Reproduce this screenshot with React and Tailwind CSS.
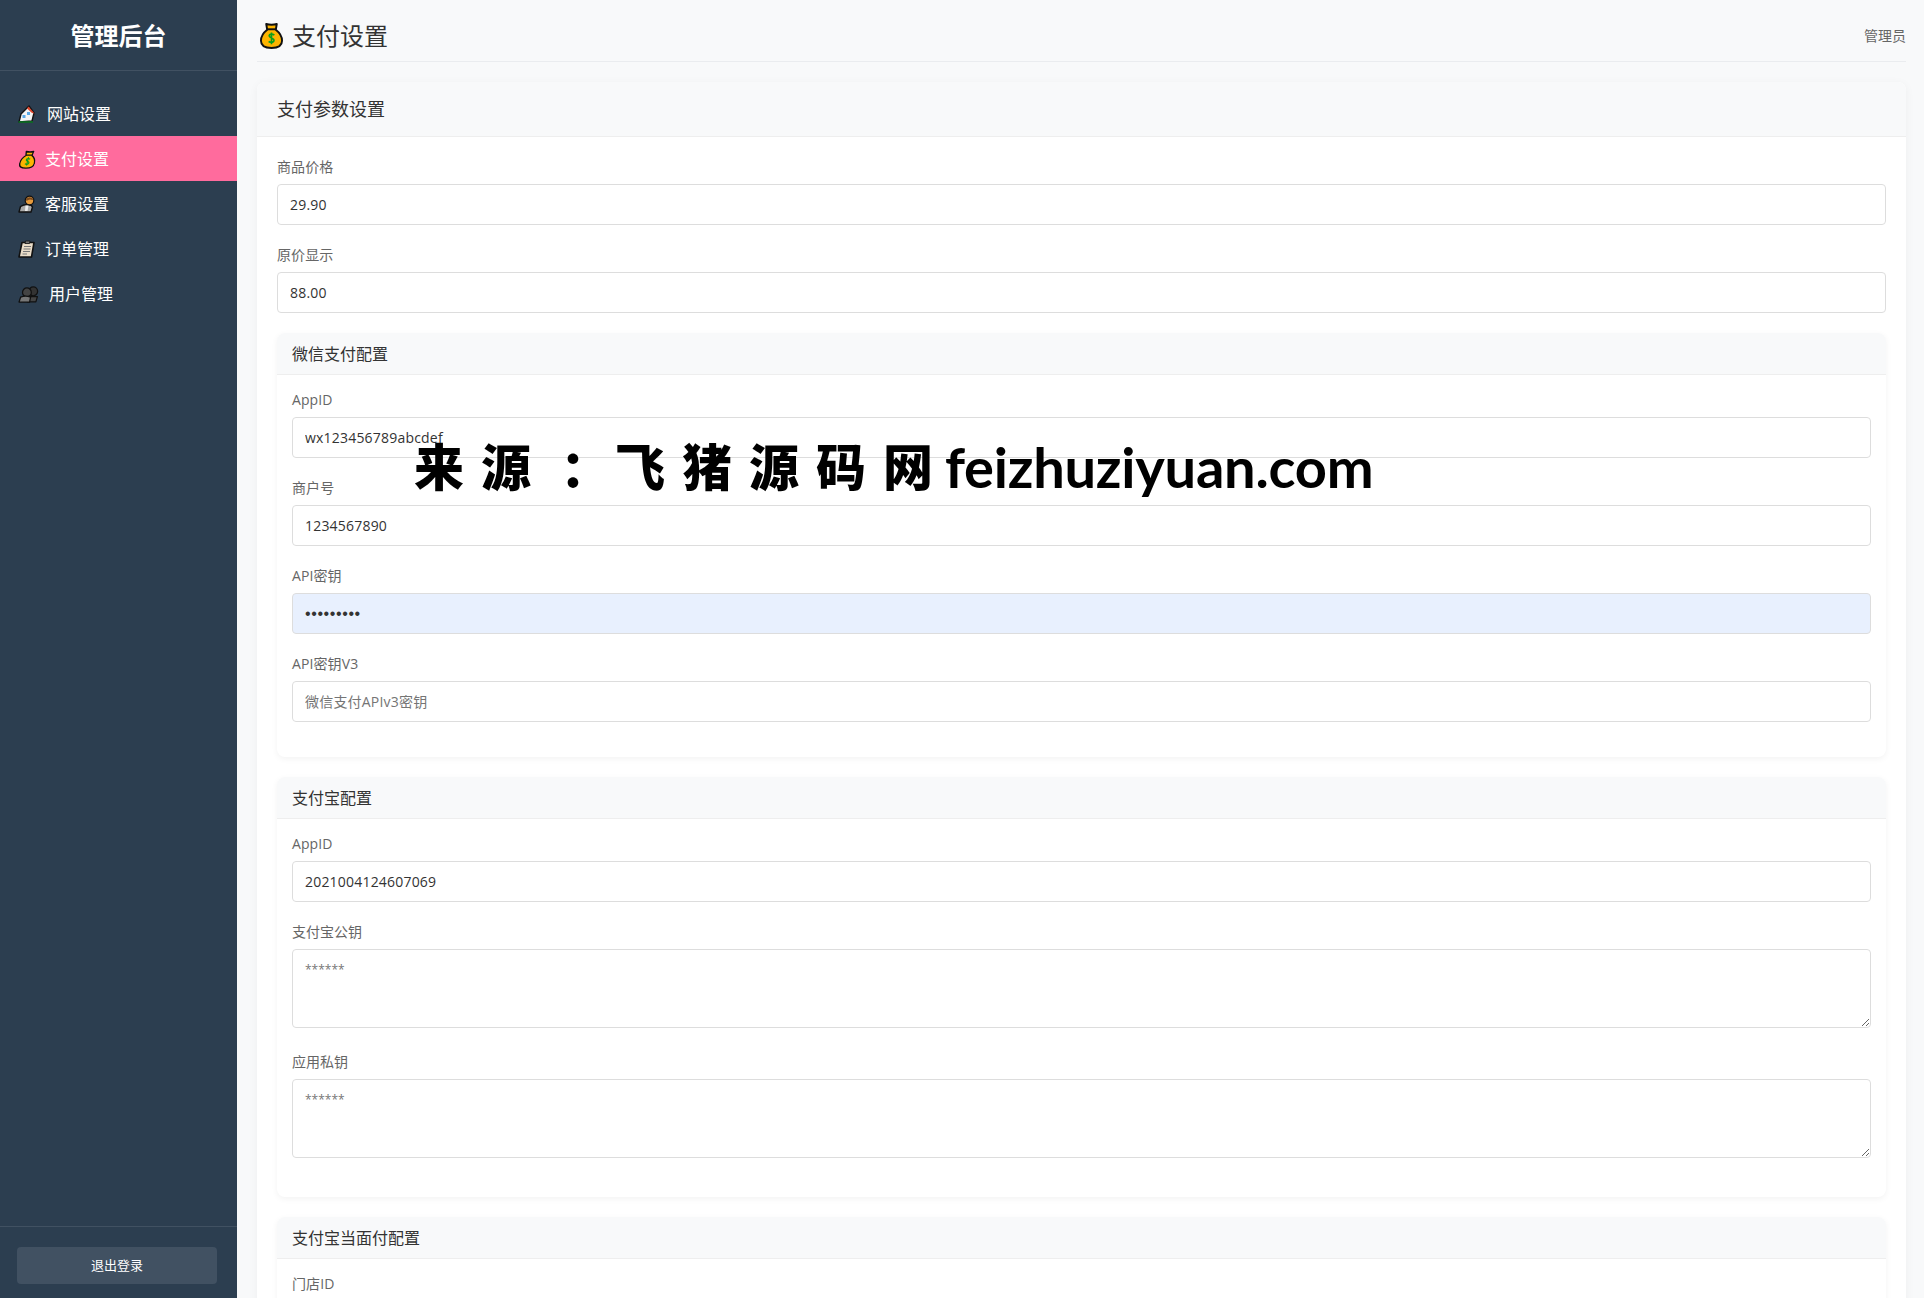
const MoneyBag = ({ className }) => (
  <svg viewBox="0 0 24 28" className={className}>
    <path d="M6.5 2 Q12 3.5 17.5 2 L16.5 8 Q23 13 23 19.5 Q23 27 12 27 Q1 27 1 19.5 Q1 13 7.5 8 Z" fill="#fdb400" stroke="#111" strokeWidth="2" strokeLinejoin="round" />
    <path d="M7.5 7.5 H16.5" stroke="#111" strokeWidth="2" />
    <path d="M15 13.5 Q12 11.8 10 13.2 Q8.6 15 12 16.5 Q15.6 18 14.2 20.3 Q12 21.8 9 20.2 M12 10.8 V23" fill="none" stroke="#0b9e1c" strokeWidth="1.7" />
  </svg>
);

const HouseIcon = () => (
  <svg viewBox="0 0 17 18" className="w-[17px] h-[18px]">
    <path d="M1 17 L3 9 L11 1 L16 8 L14 16 Z" fill="#f4f4f4" stroke="#111" strokeWidth="1.4" strokeLinejoin="round" />
    <path d="M10.5 1.5 L16.5 8.5 L14 8 L9 3.5 Z" fill="#e0452c" />
    <rect x="9" y="7" width="3" height="3" fill="#5aa9e6" />
    <rect x="4.5" y="10" width="3" height="3" fill="#5aa9e6" />
    <path d="M0.5 17 H15" stroke="#0d6b24" strokeWidth="1.8" />
  </svg>
);

const PersonIcon = () => (
  <svg viewBox="0 0 17 18" className="w-[17px] h-[18px]">
    <path d="M1 17 L2.5 11.5 Q5 9.5 10 9.5 Q14 10 14.5 12 L13 17 Z" fill="#a9a9a9" stroke="#111" strokeWidth="1.4" strokeLinejoin="round" />
    <path d="M7.5 10.5 L7 16 H9.5 L10.5 10.5 Z" fill="#ececec" />
    <circle cx="11.5" cy="5.5" r="4.3" fill="#e59a3c" stroke="#111" strokeWidth="1.2" />
    <path d="M8 4 Q11.5 0.5 15.5 4 L14.5 5 Q11 3.5 8.5 6 Z" fill="#7a4a1e" />
  </svg>
);

const ClipboardIcon = () => (
  <svg viewBox="0 0 17 18" className="w-[17px] h-[18px]">
    <path d="M4 2.5 H16 L13.5 17 H1 Z" fill="#e9dcc8" stroke="#111" strokeWidth="1.6" strokeLinejoin="round" />
    <path d="M7.5 1 H12 L11.5 3.5 H7 Z" fill="#777" stroke="#111" strokeWidth="0.8" />
    <path d="M6 6.5 H13 M5.5 9 H12.5 M5 11.5 H12 M4.5 14 H9" stroke="#777" strokeWidth="1.1" />
  </svg>
);

const PeopleIcon = () => (
  <svg viewBox="0 0 20 16" className="w-[21px] h-[17px]">
    <circle cx="14.5" cy="5" r="4.2" fill="#333" stroke="#111" strokeWidth="1.2" />
    <circle cx="8.5" cy="6" r="4.2" fill="#444" stroke="#111" strokeWidth="1.2" />
    <path d="M9 15 L10.5 10 H18.5 L17 15 Z" fill="#444" stroke="#111" strokeWidth="1.2" strokeLinejoin="round" />
    <path d="M1 15.2 L2.5 10.5 Q7 8.5 12 10.5 L11 15.2 Z" fill="#777" stroke="#111" strokeWidth="1.2" strokeLinejoin="round" />
  </svg>
);

const navItems = [
  { label: "网站设置", icon: <HouseIcon />, slot: "w-[29px]" },
  { label: "支付设置", icon: <MoneyBag className="w-[16px] h-[19px] ml-[2px] skew-x-[-14deg]" />, slot: "w-[27px]", active: true },
  { label: "客服设置", icon: <PersonIcon />, slot: "w-[27px]" },
  { label: "订单管理", icon: <ClipboardIcon />, slot: "w-[27px]" },
  { label: "用户管理", icon: <PeopleIcon />, slot: "w-[31px]" },
];

const Field = ({ label, value, placeholder, type = "text", autofill }) => (
  <div className="mb-5">
    <label className="block mb-2 text-sm leading-[19px] text-[#666] tracking-[0.1px]">{label}</label>
    <input
      type={type}
      defaultValue={value}
      placeholder={placeholder}
      className={`block w-full h-[41px] px-3 border border-[#ddd] rounded text-[#333] outline-none placeholder:text-sm placeholder:text-[#757575] ${autofill ? "bg-[#e8f0fe] font-['Liberation_Sans'] text-base tracking-[0.6px]" : "bg-white text-sm tracking-[0.2px]"}`}
    />
  </div>
);

const AreaField = ({ label, placeholder }) => (
  <div className="mb-6">
    <label className="block mb-2 text-sm leading-[19px] text-[#666]">{label}</label>
    <textarea
      placeholder={placeholder}
      className="block w-full h-[79px] px-3 py-3 border border-[#ddd] rounded text-sm text-[#333] outline-none placeholder:text-xs placeholder:text-[#757575]"
    />
  </div>
);

const SubCard = ({ title, children }) => (
  <div className="mb-5 bg-white rounded-lg shadow-[0_2px_6px_rgba(0,0,0,0.05)] overflow-hidden">
    <div className="h-[42px] px-[15px] flex items-center bg-[#f8f9fa] border-b border-[#eee] text-base text-[#333]">{title}</div>
    <div className="p-[15px]">{children}</div>
  </div>
);

export default function App() {
  return (
    <div className="relative flex h-[1298px] overflow-hidden bg-[#f8f9fa] font-['Open_Sans','Noto_Sans_CJK_SC',sans-serif]">
      {/* Sidebar */}
      <aside className="w-[237px] shrink-0 flex flex-col bg-[#2c3e50] text-white">
        <div className="h-[71px] pt-[2px] flex items-center justify-center border-b border-[#415162] text-2xl font-bold">管理后台</div>
        <nav className="pt-5">
          {navItems.map((item) => (
            <div key={item.label} className={`h-[45px] pt-px pl-[18px] flex items-center text-base ${item.active ? "bg-[#ff6b9d]" : ""}`}>
              <span className={`${item.slot} shrink-0 flex items-center`}>{item.icon}</span>
              {item.label}
            </div>
          ))}
        </nav>
        <div className="mt-auto h-[72px] pt-5 pl-[17px] border-t border-[#415162]">
          <button className="w-[200px] h-[37px] rounded bg-[#415162] text-[13px] text-white">退出登录</button>
        </div>
      </aside>

      {/* Main */}
      <main className="flex-1 min-w-0 pl-5 pr-[18px]">
        <header className="h-[62px] pt-[10px] flex items-center justify-between border-b border-[#eaecef]">
          <h1 className="flex items-center gap-[9px] text-2xl font-normal text-[#333]">
            <MoneyBag className="w-[23px] h-[27px] ml-[3px]" />
            支付设置
          </h1>
          <span className="text-sm text-[#666]">管理员</span>
        </header>

        <section className="mt-5 bg-white rounded-lg shadow-[0_2px_10px_rgba(0,0,0,0.05)] overflow-hidden">
          <div className="h-[55px] px-5 flex items-center bg-[#f8f9fa] border-b border-[#eee] text-lg text-[#333]">支付参数设置</div>
          <div className="p-5">
            <Field label="商品价格" value="29.90" />
            <Field label="原价显示" value="88.00" />

            <SubCard title="微信支付配置">
              <Field label="AppID" value="wx123456789abcdef" />
              <Field label="商户号" value="1234567890" />
              <Field label="API密钥" value="123456789" type="password" autofill />
              <Field label="API密钥V3" placeholder="微信支付APIv3密钥" />
            </SubCard>

            <SubCard title="支付宝配置">
              <Field label="AppID" value="2021004124607069" />
              <AreaField label="支付宝公钥" placeholder="******" />
              <AreaField label="应用私钥" placeholder="******" />
            </SubCard>

            <SubCard title="支付宝当面付配置">
              <Field label="门店ID" />
            </SubCard>
          </div>
        </section>
      </main>

      {/* Watermark laid over the page */}
      <div className="absolute left-[414px] top-[432px] flex items-center whitespace-nowrap text-black font-black pointer-events-none">
        <span className="text-[50px] leading-[70px] tracking-[17px]">来源</span>
        <span className="text-[50px] leading-[70px] tracking-[17px] font-['Noto_Sans_CJK_TC']">：</span>
        <span className="text-[50px] leading-[70px] tracking-[17px]">飞猪源码网</span>
        <span className="ml-[-5px] text-[56px] leading-[70px] font-['Lato'] font-bold tracking-[-0.25px]">feizhuziyuan.com</span>
      </div>
    </div>
  );
}
